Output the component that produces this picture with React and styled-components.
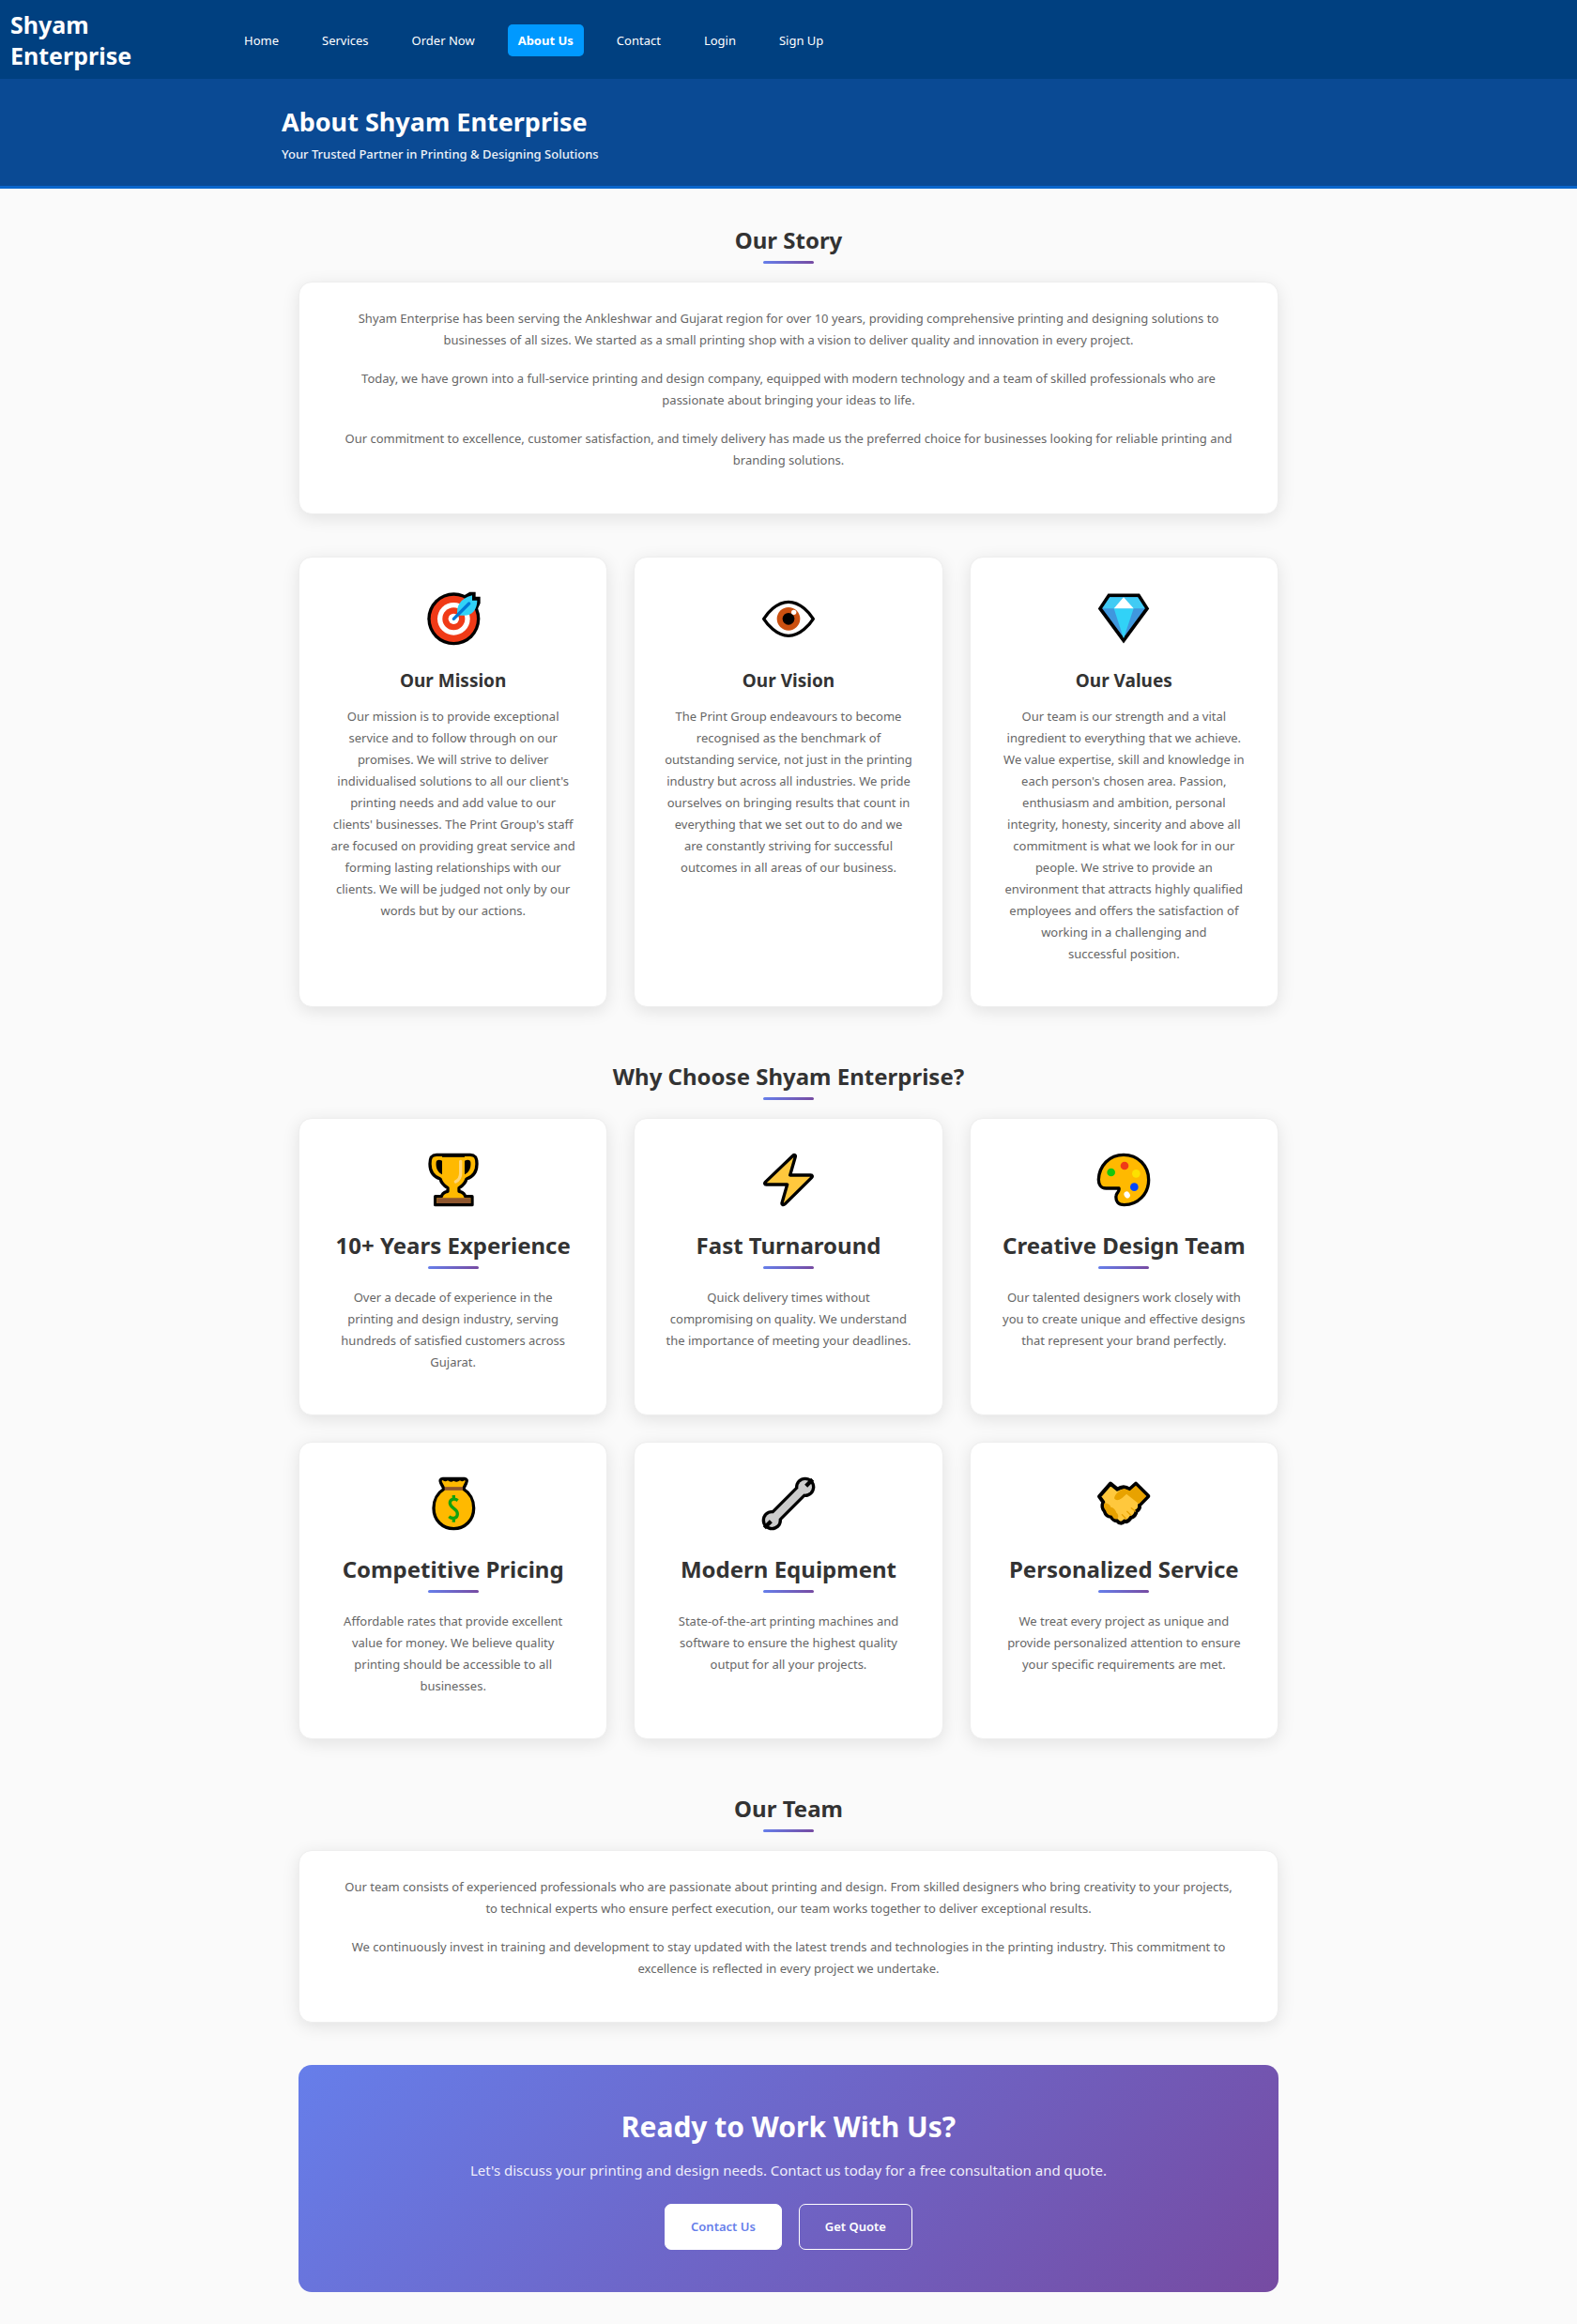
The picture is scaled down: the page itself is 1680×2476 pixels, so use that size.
import React from 'react';
import styled, { createGlobalStyle } from 'styled-components';

const GlobalStyle = createGlobalStyle`
  *, *::before, *::after { box-sizing: border-box; }
  body {
    margin: 0;
    background: #fafafa;
    color: #333;
    font-family: "Noto Sans", "Open Sans", sans-serif;
    font-size: 13px;
    line-height: 23px;
  }
  h1, h2, h3, p, ul { margin: 0; padding: 0; }
`;

/* ---------- Navigation ---------- */

const NavBar = styled.nav`
  display: flex;
  align-items: center;
  min-height: 84px;
  padding: 10px 11px 8px;
  background: #004080;
`;

const Brand = styled.a`
  width: 160px;
  margin-right: 78px;
  color: #fff;
  font-size: 25px;
  font-weight: 700;
  line-height: 33px;
  text-decoration: none;
`;

const NavList = styled.ul`
  display: flex;
  flex-wrap: wrap;
  gap: 24px;
  list-style: none;
`;

const NavLink = styled.a`
  display: block;
  padding: 6px 11px;
  border-radius: 5px;
  background: ${(p) => (p.$active ? '#0099ff' : 'transparent')};
  color: #fff;
  font-weight: ${(p) => (p.$active ? 700 : 400)};
  line-height: 22px;
  text-decoration: none;
`;

/* ---------- Page header ---------- */

const Hero = styled.header`
  padding: 28px 0 23px;
  border-bottom: 3px solid #0a66cc;
  background: #0a4a94;
  color: #fff;
`;

const HeroInner = styled.div`
  max-width: 1080px;
  margin: 0 auto;
`;

const HeroTitle = styled.h1`
  margin-bottom: 6px;
  font-size: 27px;
  font-weight: 700;
  line-height: 36px;
`;

const HeroText = styled.p`
  color: #eef3f9;
  font-weight: 500;
  line-height: 21px;
`;

/* ---------- Content ---------- */

const Main = styled.main`
  max-width: 1080px;
  margin: 0 auto;
  padding: 39px 18px 35px;
`;

const Section = styled.section`
  margin-bottom: ${(p) => (p.$wide ? 58 : 45)}px;
`;

const Heading = styled.h2`
  display: flex;
  flex-direction: column;
  align-items: center;
  margin-bottom: 19px;
  font-size: 24px;
  font-weight: 700;
  line-height: 32px;
  text-align: center;

  &::after {
    content: "";
    width: 54px;
    height: 3px;
    margin-top: 6px;
    border-radius: 2px;
    background: linear-gradient(90deg, #667eea, #764ba2);
  }
`;

const Grid = styled.div`
  display: grid;
  grid-template-columns: repeat(3, 1fr);
  gap: 28px;

  @media (max-width: 900px) {
    grid-template-columns: 1fr;
  }
`;

const Card = styled.article`
  padding: ${(p) => (p.$wide ? '27px 44px' : '26px 31px')};
  border: 1px solid #eee;
  border-radius: 14px;
  background: #fff;
  box-shadow: 0 4px 18px rgba(0, 0, 0, 0.1);
  text-align: center;
`;

const CardIcon = styled.div`
  display: flex;
  align-items: center;
  justify-content: center;
  height: 78px;
  margin-bottom: 15px;

  svg {
    display: block;
    width: 60px;
    height: 60px;
  }
`;

const CardTitle = styled.h3`
  margin-bottom: 15px;
  font-size: 19px;
  font-weight: 700;
  line-height: 24px;
`;

const Text = styled.p`
  margin-bottom: 18px;
  color: #666;
`;

/* ---------- Call to action ---------- */

const Cta = styled.section`
  padding: 45px 36px;
  border-radius: 14px;
  background: linear-gradient(135deg, #667eea 0%, #764ba2 100%);
  color: #fff;
  text-align: center;
`;

const CtaTitle = styled.h2`
  margin-bottom: 13px;
  font-size: 30px;
  font-weight: 700;
  line-height: 42px;
`;

const CtaText = styled.p`
  margin-bottom: 24px;
  color: #f0effa;
  font-size: 15px;
  line-height: 24px;
`;

const CtaActions = styled.div`
  display: flex;
  flex-wrap: wrap;
  justify-content: center;
  gap: 18px;
`;

const CtaLink = styled.a`
  padding: 12px 27px;
  border: 1px solid #fff;
  border-radius: 7px;
  background: ${(p) => (p.$solid ? '#fff' : 'transparent')};
  color: ${(p) => (p.$solid ? '#667eea' : '#fff')};
  font-weight: 600;
  text-decoration: none;
`;

/* ---------- Icons ---------- */

const TargetIcon = () => (
  <svg viewBox="38 57 180 180" aria-hidden="true">
    <circle cx="129" cy="148" r="84" fill="#000" />
    <path d="M160 74 L180 62 H199 V77 H214 V98 L204 120 Z" fill="#000" />
    <circle cx="129" cy="148" r="74" fill="#f03a17" />
    <circle cx="129" cy="148" r="52" fill="#fff" />
    <circle cx="129" cy="148" r="36" fill="#f03a17" />
    <circle cx="129" cy="148" r="17" fill="#fff" />
    <path d="M141 136 C137 108 148 84 188 73 V89 H204 C204 118 188 141 152 137 Z" fill="#31d2f7" />
    <path d="M129 148 L178 99" stroke="#0078d7" strokeWidth="10" strokeLinecap="round" />
  </svg>
);

const EyeIcon = () => (
  <svg viewBox="45 57 180 180" aria-hidden="true">
    <path
      d="M56 148 C66 132 96 94 135 94 C174 94 204 132 214 148 C204 164 174 202 135 202 C96 202 66 164 56 148 Z"
      fill="#fff" stroke="#000" strokeWidth="10" strokeLinejoin="round"
    />
    <circle cx="135" cy="148" r="37" fill="#ca5010" />
    <circle cx="135" cy="148" r="19" fill="#000" />
    <circle cx="152" cy="127" r="8" fill="#fff" />
  </svg>
);

const DiamondIcon = () => (
  <svg viewBox="51 57 180 180" aria-hidden="true">
    <path d="M94 73 H189 L216 115 L141 217 L66 115 Z" fill="#3f97de" stroke="#000" strokeWidth="11" />
    <path d="M97 79 H186 L209 115 H73 Z" fill="#41cbf4" />
    <path d="M110 115 H173 L141 211 Z" fill="#31d2f7" />
    <path d="M141 79 L173 115 H110 Z" fill="#fff" />
  </svg>
);

const TrophyIcon = () => (
  <svg viewBox="38 49 180 180" aria-hidden="true">
    <path
      d="M74 59 H182 C198 59 203 68 203 88 C203 114 189 130 170 136 C166 150 158 158 146 165 V176 C158 178 164 184 166 192 H188 V219 H70 V192 H90 C92 184 98 178 110 176 V165 C98 158 90 150 86 136 C67 130 53 114 53 88 C53 68 58 59 74 59 Z"
      fill="#ffb900" stroke="#000" strokeWidth="10" strokeLinejoin="round"
    />
    <path d="M92 64 H164" stroke="#000" strokeWidth="5" />
    <path d="M73 82 C75 74 83 73 92 78 V122 C78 115 71 102 73 82 Z" fill="#000" />
    <path d="M183 82 C181 74 173 73 164 78 V122 C178 115 185 102 183 82 Z" fill="#000" />
    <path d="M151 80 V118 C151 133 145 140 135 145" fill="none" stroke="#ffd678" strokeWidth="10" strokeLinecap="round" />
    <path d="M75 197 H183 V214 H75 Z" fill="#8e562e" />
  </svg>
);

const BoltIcon = () => (
  <svg viewBox="38 49 180 180" aria-hidden="true">
    <path
      d="M143 61 C147 57 151 60 150 65 L133 124 H199 C205 124 205 129 202 132 L117 216 C112 221 106 219 107 213 L124 154 H57 C51 154 51 149 54 146 Z"
      fill="#ffc83d" stroke="#000" strokeWidth="10" strokeLinejoin="round"
    />
  </svg>
);

const PaletteIcon = () => (
  <svg viewBox="38 49 180 180" aria-hidden="true">
    <path
      d="M128 59 C174 59 208 94 208 139 C208 184 174 219 130 219 C110 219 102 207 104 190 C105 179 116 178 113 166 H72 C54 166 48 152 48 138 C50 94 82 59 128 59 Z"
      fill="#ffb900" stroke="#000" strokeWidth="10" strokeLinejoin="round"
    />
    <circle cx="131" cy="94" r="13" fill="#f03a17" />
    <circle cx="88" cy="115" r="13" fill="#16c60c" />
    <circle cx="168" cy="119" r="13" fill="#fce100" />
    <circle cx="162" cy="162" r="13" fill="#0046ff" />
    <ellipse cx="139" cy="187" rx="9" ry="11" transform="rotate(-30 139 187)" fill="#fff" />
  </svg>
);

const MoneyIcon = () => (
  <svg viewBox="38 49 180 180" aria-hidden="true">
    <path
      d="M94 59 H163 C171 59 173 66 169 73 L160 92 C180 104 193 127 193 153 C193 192 165 219 129 219 C93 219 65 192 65 153 C65 127 78 104 98 92 L88 73 C84 66 86 59 94 59 Z"
      fill="#ffb900" stroke="#000" strokeWidth="10" strokeLinejoin="round"
    />
    <path d="M92 62 Q100 72 110 65 Q119 73 129 66 Q139 73 149 65 Q158 72 166 62 Z" fill="#000" />
    <path d="M100 91 H158" stroke="#8e562e" strokeWidth="11" />
    <path
      d="M142 129 C132 121 117 124 117 137 C117 154 141 153 141 172 C141 187 124 189 114 180 M129 112 V125 M129 185 V198"
      fill="none" stroke="#13a10e" strokeWidth="10"
    />
  </svg>
);

const WrenchIcon = () => (
  <svg viewBox="45 49 180 180" aria-hidden="true">
    <path d="M83 191 L187 87" stroke="#000" strokeWidth="44" />
    <circle cx="188" cy="86" r="32" fill="#000" />
    <circle cx="82" cy="192" r="32" fill="#000" />
    <path d="M83 191 L187 87" stroke="#cccccc" strokeWidth="25" />
    <circle cx="188" cy="86" r="22" fill="#cccccc" />
    <circle cx="82" cy="192" r="22" fill="#cccccc" />
    <path d="M191 83 L212 62 M79 195 L58 216" stroke="#000" strokeWidth="13" />
  </svg>
);

const HandshakeIcon = () => (
  <svg viewBox="51 49 180 180" aria-hidden="true">
    <path
      d="M99 75 L121 93 Q141 79 160 93 L180 75 L220 115 L192 144 C194 156 188 160 182 163 C180 176 172 182 164 184 C158 194 150 198 144 195 C136 204 126 202 120 194 C108 194 104 186 100 180 C88 180 82 170 80 163 C72 154 72 144 76 134 L63 116 Z"
      fill="#ffc83d" stroke="#000" strokeWidth="12" strokeLinejoin="round"
    />
    <path d="M180 81 L214 115 L190 140 L150 108 C138 120 122 134 112 124 C108 116 126 94 144 91 L161 98 Z" fill="#e8a200" />
    <path d="M80 137 C92 138 98 144 100 150 C110 152 116 160 118 168 C124 172 126 182 121 188 C110 190 108 184 104 177 C92 177 86 168 85 162 C77 154 76 145 80 137 Z" fill="#e8a200" />
    <path d="M166 153 L178 163 M152 164 L164 176 M136 174 L148 187" stroke="#e8a200" strokeWidth="4" strokeLinecap="round" />
  </svg>
);

/* ---------- Data ---------- */

const navItems = ['Home', 'Services', 'Order Now', 'About Us', 'Contact', 'Login', 'Sign Up'];

const story = [
  'Shyam Enterprise has been serving the Ankleshwar and Gujarat region for over 10 years, providing comprehensive printing and designing solutions to businesses of all sizes. We started as a small printing shop with a vision to deliver quality and innovation in every project.',
  'Today, we have grown into a full-service printing and design company, equipped with modern technology and a team of skilled professionals who are passionate about bringing your ideas to life.',
  'Our commitment to excellence, customer satisfaction, and timely delivery has made us the preferred choice for businesses looking for reliable printing and branding solutions.',
];

const principles = [
  {
    icon: TargetIcon,
    title: 'Our Mission',
    text: "Our mission is to provide exceptional service and to follow through on our promises. We will strive to deliver individualised solutions to all our client's printing needs and add value to our clients'\u00a0businesses. The Print Group's staff are focused on providing great service and forming lasting relationships with our clients. We will be judged not only by our words but by our actions.",
  },
  {
    icon: EyeIcon,
    title: 'Our Vision',
    text: 'The Print Group endeavours to become recognised as the benchmark of outstanding service, not just in the printing industry but across all industries. We pride ourselves on bringing results that count in everything that we set out to do and we are constantly striving for successful outcomes in all areas of our business.',
  },
  {
    icon: DiamondIcon,
    title: 'Our Values',
    text: "Our team is our strength and a vital ingredient to everything that we achieve. We value expertise, skill and knowledge in each person's chosen area. Passion, enthusiasm and ambition, personal integrity, honesty, sincerity and above all commitment is what we look for in our people. We strive to provide an environment that attracts highly qualified employees and offers the satisfaction of working in a challenging and successful\u00a0position.",
  },
];

const features = [
  { icon: TrophyIcon, title: '10+ Years Experience', text: 'Over a decade of experience in the printing\u00a0and design industry, serving hundreds of satisfied customers across Gujarat.' },
  { icon: BoltIcon, title: 'Fast Turnaround', text: 'Quick delivery times without compromising\u00a0on quality. We understand the importance of meeting your deadlines.' },
  { icon: PaletteIcon, title: 'Creative Design Team', text: 'Our talented designers work closely with you to create unique and effective designs that represent your brand perfectly.' },
  { icon: MoneyIcon, title: 'Competitive Pricing', text: 'Affordable rates that provide excellent value for money. We believe quality printing should be accessible to all businesses.' },
  { icon: WrenchIcon, title: 'Modern Equipment', text: 'State-of-the-art printing machines and software to ensure the highest quality output for all your projects.' },
  { icon: HandshakeIcon, title: 'Personalized Service', text: 'We treat every project as unique and provide personalized attention to ensure your specific requirements are met.' },
];

const team = [
  'Our team consists of experienced professionals who are passionate about printing and design. From skilled designers who bring creativity to your projects, to technical experts who ensure perfect execution, our team works together to deliver exceptional results.',
  'We continuously invest in training and development to stay updated with the latest trends and technologies in the printing industry. This commitment to excellence is reflected in every project we undertake.',
];

export default function App() {
  return (
    <>
      <GlobalStyle />
      <NavBar>
        <Brand href="#home">Shyam Enterprise</Brand>
        <NavList>
          {navItems.map((item) => (
            <li key={item}>
              <NavLink href="#" $active={item === 'About Us'}>{item}</NavLink>
            </li>
          ))}
        </NavList>
      </NavBar>

      <Hero>
        <HeroInner>
          <HeroTitle>About Shyam Enterprise</HeroTitle>
          <HeroText>Your Trusted Partner in Printing &amp; Designing Solutions</HeroText>
        </HeroInner>
      </Hero>

      <Main>
        <Section>
          <Heading>Our Story</Heading>
          <Card $wide>
            {story.map((text) => <Text key={text}>{text}</Text>)}
          </Card>
        </Section>

        <Section $wide>
          <Grid>
            {principles.map(({ icon: Icon, title, text }) => (
              <Card key={title}>
                <CardIcon><Icon /></CardIcon>
                <CardTitle>{title}</CardTitle>
                <Text>{text}</Text>
              </Card>
            ))}
          </Grid>
        </Section>

        <Section $wide>
          <Heading>Why Choose Shyam Enterprise?</Heading>
          <Grid>
            {features.map(({ icon: Icon, title, text }) => (
              <Card key={title}>
                <CardIcon><Icon /></CardIcon>
                <Heading as="h3">{title}</Heading>
                <Text>{text}</Text>
              </Card>
            ))}
          </Grid>
        </Section>

        <Section>
          <Heading>Our Team</Heading>
          <Card $wide>
            {team.map((text) => <Text key={text}>{text}</Text>)}
          </Card>
        </Section>

        <Cta>
          <CtaTitle>Ready to Work With Us?</CtaTitle>
          <CtaText>Let's discuss your printing and design needs. Contact us today for a free consultation and quote.</CtaText>
          <CtaActions>
            <CtaLink href="#contact" $solid>Contact Us</CtaLink>
            <CtaLink href="#quote">Get Quote</CtaLink>
          </CtaActions>
        </Cta>
      </Main>
    </>
  );
}
